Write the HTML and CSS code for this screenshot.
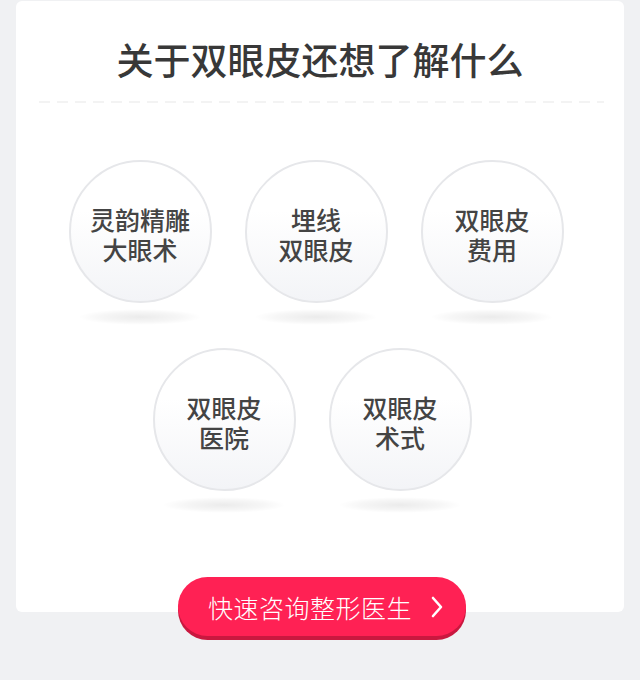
FILE: index.html
```html
<!DOCTYPE html>
<html lang="zh-CN">
	<head>
		<meta charset="utf-8" />
		<title>关于双眼皮还想了解什么</title>
		<link rel="stylesheet" href="styles.css">
	</head>

	<body>
		<div class="page">
			<div class="card">
				<h2 class="title">关于双眼皮还想了解什么</h2>
				<div class="divider"></div>
				<ul class="topics">
					<li class="topic"><a class="ball" href="#"><span>灵韵精雕</span><span>大眼术</span></a></li>
					<li class="topic"><a class="ball" href="#"><span>埋线</span><span>双眼皮</span></a></li>
					<li class="topic"><a class="ball" href="#"><span>双眼皮</span><span>费用</span></a></li>
					<li class="topic next-row"><a class="ball" href="#"><span>双眼皮</span><span>医院</span></a></li>
					<li class="topic"><a class="ball" href="#"><span>双眼皮</span><span>术式</span></a></li>
				</ul>
			</div>

			<div class="action">
				<a class="consult" href="#">
					<span>快速咨询整形医生</span>
					<svg class="arrow" width="14" height="22" viewBox="0 0 14 22">
						<polyline points="3,2 11,11 3,20" fill="none" stroke="#fff" stroke-width="2.6" stroke-linecap="round" stroke-linejoin="round" />
					</svg>
				</a>
			</div>
		</div>
	</body>
</html>
```

FILE: styles.css
```css
html,
body,
ul,
li,
h2 {
	margin: 0;
	padding: 0;
}
body {
	background: #f0f1f3;
	font-family: "Noto Sans CJK SC", "Noto Sans", sans-serif;
	color: #444;
}
a {
	text-decoration: none;
}
.page {
	padding-top: 1px;
	height: 679px;
}
.card {
	margin: 0 16px;
	padding: 32px 0 76px;
	background: #fff;
	border-radius: 6px;
}
.title {
	line-height: 52px;
	font-size: 37px;
	font-weight: 500;
	text-align: center;
	color: #383838;
}
.divider {
	height: 2px;
	margin: 16px 20px 0 23px;
	background: repeating-linear-gradient(90deg, #f3f3f3 0, #f3f3f3 11px, transparent 11px, transparent 18px);
}
.topics {
	list-style: none;
	display: flex;
	flex-wrap: wrap;
	justify-content: center;
	margin-top: 57px;
	padding-right: 8px;
}
.topic {
	width: 176px;
	height: 188px;
	display: flex;
	flex-direction: column;
	align-items: center;
}
.next-row {
	margin-left: -8px;
}
.topic::after {
	content: "";
	width: 124px;
	height: 16px;
	margin-top: 6px;
	background: radial-gradient(ellipse at center, rgba(0, 0, 0, 0.08) 0, rgba(0, 0, 0, 0.035) 45%, rgba(0, 0, 0, 0) 70%);
}
.ball {
	box-sizing: border-box;
	width: 143px;
	height: 143px;
	padding-top: 4px;
	border: 2px solid #e6e7ea;
	border-radius: 50%;
	background: linear-gradient(#fff, #fff 35%, #f3f4f7);
	display: flex;
	flex-direction: column;
	align-items: center;
	justify-content: center;
	text-align: center;
	font-size: 25px;
	line-height: 30px;
	font-weight: 500;
	color: #444;
}
.ball span {
	display: block;
}
.action {
	margin-top: -35px;
	padding-left: 4px;
	display: flex;
	justify-content: center;
}
.consult {
	width: 288px;
	height: 59px;
	box-sizing: border-box;
	padding: 0 22px 0 30px;
	border-radius: 30px;
	background: #ff2154;
	box-shadow: 0 4px 0 #c9183f;
	display: flex;
	align-items: center;
	justify-content: space-between;
	color: #fff;
	font-size: 25px;
	font-weight: 300;
	letter-spacing: 0.5px;
}
.arrow {
	display: block;
}
```
